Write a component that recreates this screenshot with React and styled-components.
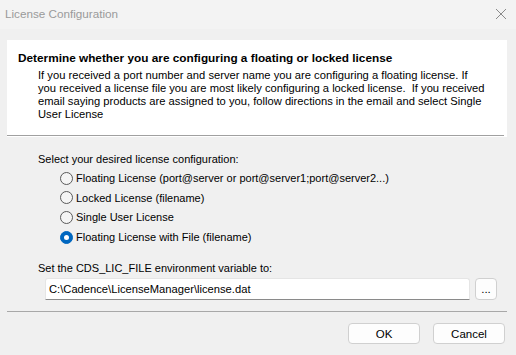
import React, { useState } from 'react';
import styled, { createGlobalStyle } from 'styled-components';

const Global = createGlobalStyle`
html, body {
   margin: 0;
   padding: 0;
   background: #f0f0f0;
}
* { box-sizing: border-box; }
`;

const Win = styled.div`
width: 516px;
height: 355px;
display: flex;
flex-direction: column;
background: #f0f0f0;
font-family: "Liberation Sans", Arial, sans-serif;
font-size: 11px;
color: #000;
overflow: hidden;
`;

const TitleBar = styled.div`
height: 29px;
flex: none;
display: flex;
align-items: center;
justify-content: space-between;
padding: 0 9px 2px 5px;
background: #f3f3f3;
color: #9a9a9a;
font-size: 11.7px;
`;

const Body = styled.div`
display: flex;
flex-direction: column;
padding: 11px 9px 0 7px;
`;

const Panel = styled.div`
background: #fff;
padding: 11px 0 1px 0;
display: flex;
flex-direction: column;
`;

const Heading = styled.div`
font-weight: bold;
font-size: 11.8px;
line-height: 14px;
padding-left: 11px;
`;

const Desc = styled.p`
margin: 4px 20px 14px 31px;
line-height: 13px;
font-size: 11.2px;
white-space: nowrap;
`;

const Rule = styled.div`
height: 1px;
background: ${p => p.$color || '#a0a0a0'};
margin-right: ${p => p.$right || 0}px;
`;

const Section = styled.div`
display: flex;
flex-direction: column;
padding-left: 31px;
`;

const Label = styled.div`
line-height: 14px;
margin-top: ${p => p.$top || 0}px;
`;

const Options = styled.div`
display: flex;
flex-direction: column;
gap: 5.7px;
padding: 5px 0 0 22px;
`;

const Option = styled.label`
display: flex;
align-items: center;
gap: 3px;
height: 14px;
cursor: default;
`;

const Dot = styled.span`
width: 13px;
height: 13px;
border-radius: 50%;
flex: none;
border: 1px solid ${p => p.$on ? '#0067c0' : '#5a5a5a'};
background: ${p => p.$on ? '#0067c0' : '#f5f5f5'};
display: flex;
align-items: center;
justify-content: center;
&::after {
   content: '';
   width: 5px;
   height: 5px;
   border-radius: 50%;
   background: #fff;
   display: ${p => p.$on ? 'block' : 'none'};
}
`;

const FileRow = styled.div`
display: flex;
align-items: center;
gap: 5px;
padding: 3px 0 0 7px;
`;

const Input = styled.input`
width: 425px;
height: 22px;
border: 1px solid #e5e5e5;
border-bottom: 1px solid #8a8a8a;
border-radius: 3px 3px 0 0;
background: #fff;
padding: 0 0 1px 3px;
font: inherit;
font-size: 11.2px;
color: #000;
outline: none;
`;

const Btn = styled.button`
width: ${p => p.$w || 72}px;
height: ${p => p.$h || 21}px;
border: 1px solid #d0d0d0;
border-radius: 4px;
background: #fdfdfd;
font: inherit;
font-size: 11.5px;
color: #000;
padding: 0;
display: flex;
align-items: center;
justify-content: center;
`;

const Footer = styled.div`
display: flex;
justify-content: flex-end;
gap: 13px;
padding: 11px 2px 0 0;
`;

const options = [
   'Floating License (port@server or port@server1;port@server2...)',
   'Locked License (filename)',
   'Single User License',
   'Floating License with File (filename)',
];

export default function App() {
   const [sel, setSel] = useState(3);
   const [path, setPath] = useState('C:\\Cadence\\LicenseManager\\license.dat');

   return (
      <Win>
         <Global />
         <TitleBar>
            <span>License Configuration</span>
            <svg width="12" height="12" viewBox="0 0 12 12">
               <path d="M1 1L11 11M11 1L1 11" stroke="#8a8a8a" strokeWidth="1" fill="none" />
            </svg>
         </TitleBar>
         <Body>
            <Panel>
               <Heading>Determine whether you are configuring a floating or locked license</Heading>
               <Desc>
                  If you received a port number and server name you are configuring a floating license. If<br />
                  you received a license file you are most likely configuring a locked license.&nbsp; If you received<br />
                  email saying products are assigned to you, follow directions in the email and select Single<br />
                  User License
               </Desc>
               <Rule $right={3} />
            </Panel>
            <Section>
               <Label $top={15}>Select your desired license configuration:</Label>
               <Options>
                  {options.map((o, i) => (
                     <Option key={o} onClick={() => setSel(i)}>
                        <Dot $on={sel === i} />
                        {o}
                     </Option>
                  ))}
               </Options>
               <Label $top={17}>Set the CDS_LIC_FILE environment variable to:</Label>
               <FileRow>
                  <Input value={path} onChange={e => setPath(e.target.value)} />
                  <Btn $w={22} $h={22}>...</Btn>
               </FileRow>
            </Section>
            <Rule $color="#a8a8a8" style={{ marginTop: 11 }} />
            <Footer>
               <Btn>OK</Btn>
               <Btn>Cancel</Btn>
            </Footer>
         </Body>
      </Win>
   );
}
